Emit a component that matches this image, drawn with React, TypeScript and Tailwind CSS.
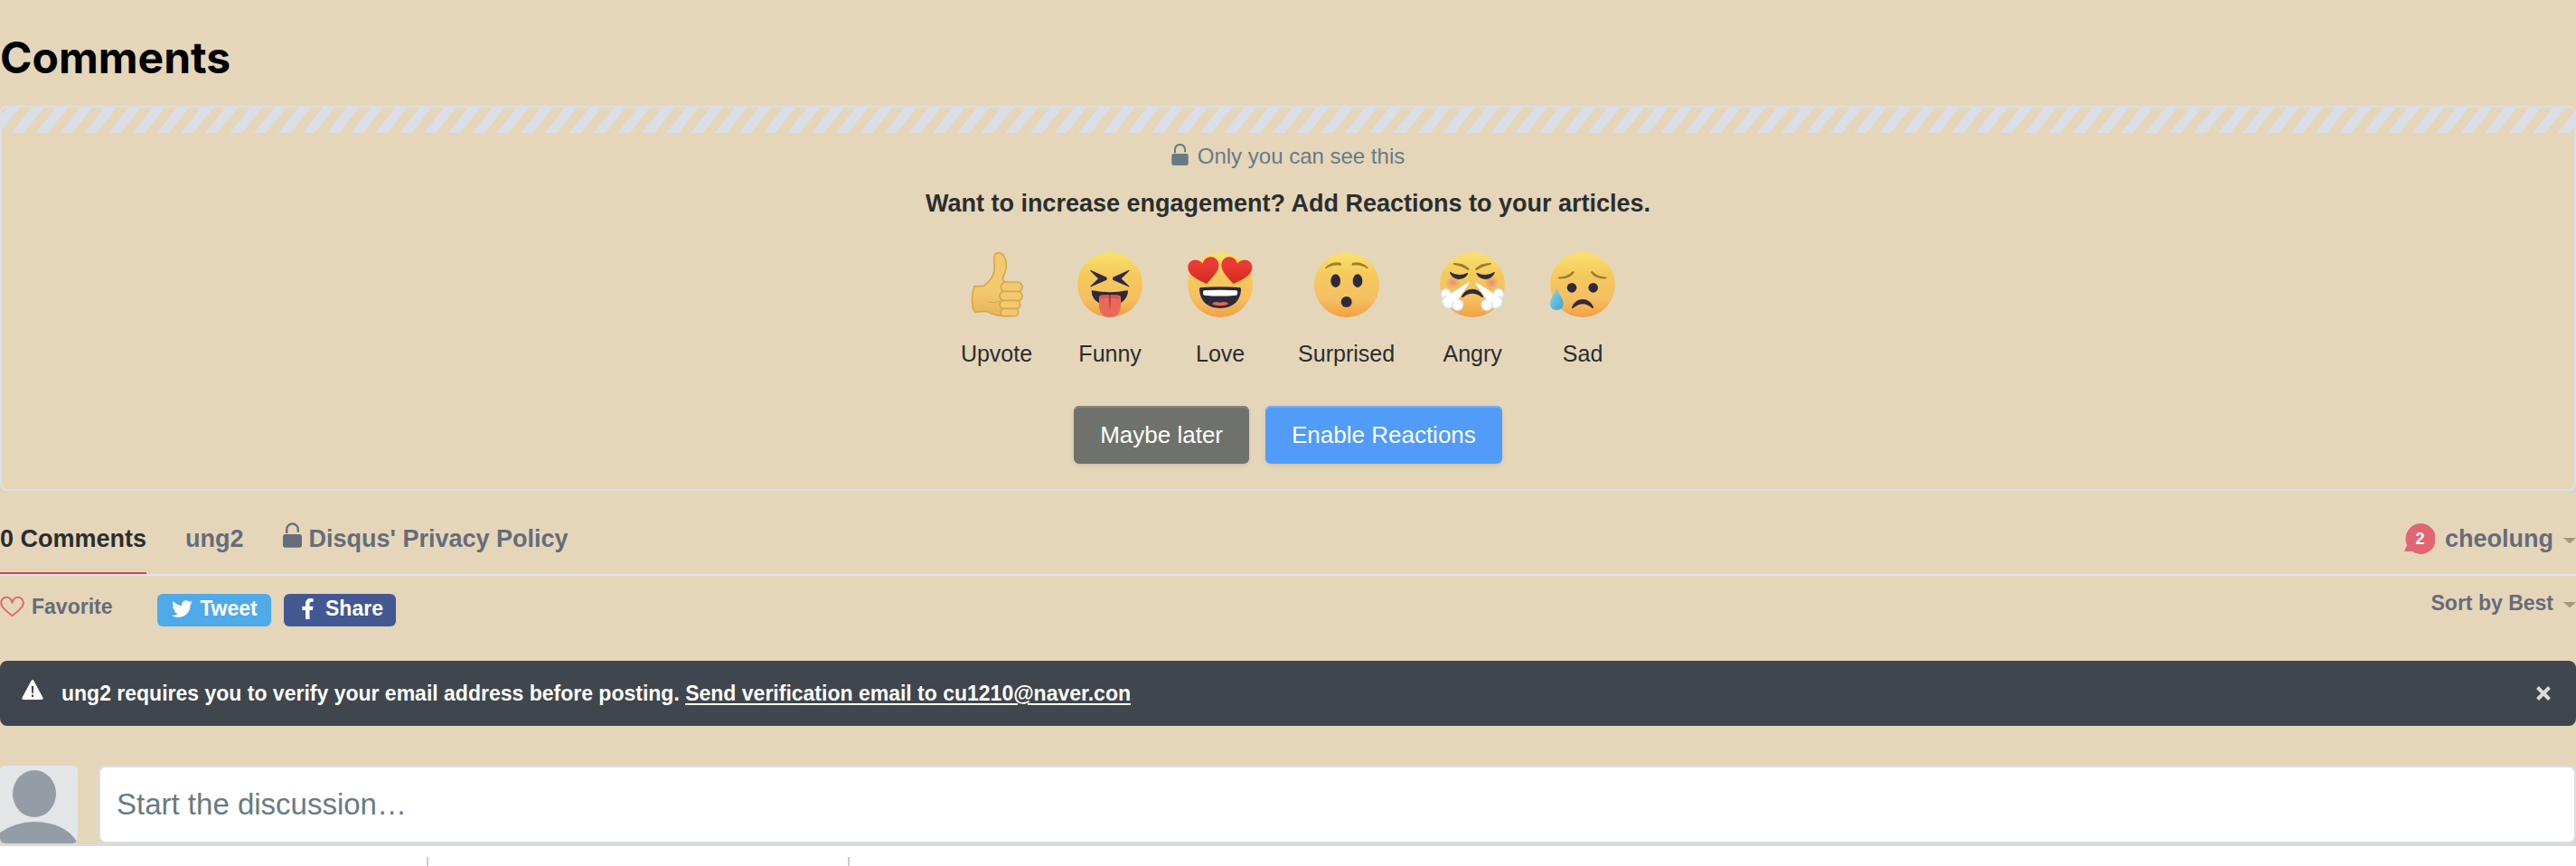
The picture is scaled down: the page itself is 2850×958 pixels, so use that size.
import type { ReactNode } from "react";
import { FaTwitter, FaFacebookF } from "react-icons/fa";

const INK = "#2e2a3b";
const BROW = "#9a7d2f";

function Face({ id, children }: { id: string; children: ReactNode }) {
  return (
    <svg viewBox="0 0 216 216" className="size-[72px]" aria-hidden="true">
      <defs>
        <linearGradient id={id} x1="0" y1="0" x2="0" y2="1">
          <stop offset="0" stopColor="#f8e36f" />
          <stop offset="0.35" stopColor="#f5c95b" />
          <stop offset="0.72" stopColor="#f4c063" />
          <stop offset="1" stopColor="#f2a040" />
        </linearGradient>
      </defs>
      <circle cx="108" cy="108" r="108" fill={`url(#${id})`} />
      {children}
    </svg>
  );
}

/* Draws a shape and its mirror image about the face's vertical axis. */
function Mirrored({ children }: { children: ReactNode }) {
  return (
    <>
      {children}
      <g transform="translate(215 0) scale(-1 1)">{children}</g>
    </>
  );
}

function Upvote() {
  const line = { fill: "#f3c970", stroke: "#d6a650", strokeWidth: 5 };
  return (
    <svg viewBox="0 0 216 216" className="size-[72px]" aria-hidden="true">
      <defs>
        <linearGradient id="palm" x1="0" y1="0" x2="0" y2="1">
          <stop offset="0.6" stopColor="#f3c970" />
          <stop offset="1" stopColor="#e5b45a" />
        </linearGradient>
      </defs>
      <path
        d="M33 113 L64 112 C82 98 97 80 99 62 C101 42 98 26 99 14 C101 5 108 2 114 2 C131 3 139 24 139 45 C139 62 131 75 127 87 C128 95 133 98 140 99 L165 110 V205 L150 211 C120 214 100 210 76 197 C60 194 48 198 35 200 C22 180 23 140 33 113Z"
        fill="url(#palm)"
        stroke="#d6a650"
        strokeWidth="5"
        strokeLinejoin="round"
      />
      <rect x="121" y="99" width="71" height="33" rx="16" {...line} />
      <rect x="117" y="130" width="75" height="31" rx="15" {...line} />
      <rect x="117" y="160" width="68" height="28" rx="14" {...line} />
      <rect x="121" y="187" width="58" height="25" rx="12" {...line} />
      <path d="M80 166 Q98 169 117 163" fill="none" stroke="#d6a650" strokeWidth="3" strokeLinecap="round" />
    </svg>
  );
}

function Funny() {
  return (
    <Face id="funny">
      <Mirrored>
        <path d="M44 59 L97 83 Q99 88 97 92 L45 115 Q41 116 44 112 L69 88 L43 62 Q42 59 44 59Z" fill={INK} />
      </Mirrored>
      <path d="M50 127 Q108 139 165 127 Q168 127 168 131 C165 158 145 175 108 175 C70 175 49 158 47 131 Q47 126 50 127Z" fill={INK} />
      <path d="M72 150 Q73 141 88 142 L128 142 Q143 141 144 150 V176 C144 202 130 216 108 216 C86 216 72 202 72 176Z" fill="#e9695b" />
      <path d="M76 145 Q108 138 140 145 L140 155 Q108 150 76 155Z" fill="#c74f4b" opacity="0.6" />
      <path d="M105 142 H111 L109 186 Q108 191 107 186Z" fill="#a3373c" />
    </Face>
  );
}

function Love() {
  return (
    <Face id="love">
      <defs>
        <linearGradient id="heart" x1="0" y1="0" x2="0" y2="1">
          <stop offset="0.3" stopColor="#e93b34" />
          <stop offset="1" stopColor="#cf2a1c" />
        </linearGradient>
      </defs>
      <Mirrored>
        <path
          d="M63 105 C40 93 4 80 1 53 C-2 25 33 15 50 38 C55 10 98 7 103 40 C105 62 82 84 63 105Z"
          fill="url(#heart)"
        />
      </Mirrored>
      <path d="M42 117 Q108 112 174 117 Q178 118 177 127 C174 166 146 186 108 186 C70 186 42 166 39 127 Q38 118 42 117Z" fill={INK} />
      <path d="M54 127 Q108 123 162 127 Q166 128 165 134 Q165 143 160 143 Q108 148 56 143 Q51 143 51 134 Q50 128 54 127Z" fill="#fff" />
      <path d="M80 172 Q88 164 98 165 Q108 168 118 165 Q130 164 136 172 Q126 178 108 178 Q90 178 80 172Z" fill="#e2665a" />
    </Face>
  );
}

function Surprised() {
  return (
    <Face id="surprised">
      <Mirrored>
        <path d="M37 50 Q59 30 88 35 Q92 39 89 44 Q62 39 40 54 Q34 55 37 50Z" fill={BROW} />
        <ellipse cx="71" cy="95" rx="16" ry="22" fill={INK} />
      </Mirrored>
      <circle cx="107" cy="165" r="18" fill={INK} />
    </Face>
  );
}

function Angry() {
  return (
    <Face id="angry">
      <defs>
        <radialGradient id="blush">
          <stop offset="0" stopColor="#e68a78" stopOpacity="0.9" />
          <stop offset="1" stopColor="#e68a78" stopOpacity="0" />
        </radialGradient>
        <radialGradient id="puff">
          <stop offset="0.6" stopColor="#fff" />
          <stop offset="1" stopColor="#d3dfe8" />
        </radialGradient>
      </defs>
      <Mirrored>
        <circle cx="44" cy="101" r="25" fill="url(#blush)" />
        <path d="M45 36 Q78 34 97 54 Q98 60 94 61 Q72 45 46 41 Q42 38 45 36Z" fill={BROW} />
        <path d="M34 65 Q62 84 92 68 Q95 68 93 73 Q83 90 62 90 Q42 88 33 69 Q32 65 34 65Z" fill={INK} />
        <circle cx="20" cy="138" r="18" fill="url(#puff)" />
        <circle cx="30" cy="164" r="24" fill="url(#puff)" />
        <circle cx="59" cy="175" r="20" fill="url(#puff)" />
        <path d="M96 99 Q99 101 96 106 L58 160 L30 168 L20 142 L32 140 Z" fill="#fff" />
      </Mirrored>
      <path d="M72 146 Q84 122 108 122 Q132 122 144 146 Q145 153 139 149 Q108 126 77 149 Q71 153 72 146Z" fill={INK} />
    </Face>
  );
}

function Sad() {
  return (
    <Face id="sad">
      <defs>
        <linearGradient id="tear" x1="0" y1="0" x2="1" y2="1">
          <stop offset="0" stopColor="#8fd3f5" />
          <stop offset="1" stopColor="#3fa3cf" />
        </linearGradient>
      </defs>
      <Mirrored>
        <path d="M27 83 Q58 82 75 63 Q81 62 80 68 Q62 90 30 88 Q25 86 27 83Z" fill={BROW} />
        <circle cx="72" cy="118" r="16" fill={INK} />
      </Mirrored>
      <path d="M72 182 Q84 156 108 156 Q132 156 144 182 Q144 189 139 185 Q108 158 77 185 Q71 189 72 182Z" fill={INK} />
      <path d="M22 120 C26 136 44 152 44 170 C44 184 34 192 22 192 C10 192 0 184 0 170 C0 152 18 136 22 120Z" fill="url(#tear)" />
    </Face>
  );
}

function Lock({ className }: { className: string }) {
  return (
    <svg viewBox="0 0 20 26" className={className} aria-hidden="true">
      <path d="M4 11 V7 a6 6 0 0 1 12 0 V10" fill="none" stroke="currentColor" strokeWidth="2.2" />
      <rect y="12" width="20" height="14" rx="2.5" fill="currentColor" />
    </svg>
  );
}

function Caret() {
  return (
    <svg viewBox="0 0 14 6" className="mt-1 h-[6px] w-[14px]" aria-hidden="true">
      <path d="M0 0 H14 L8 5.5 Q7 6.4 6 5.5Z" fill="#a39781" />
    </svg>
  );
}

const reactions = [
  { label: "Upvote", icon: <Upvote /> },
  { label: "Funny", icon: <Funny /> },
  { label: "Love", icon: <Love /> },
  { label: "Surprised", icon: <Surprised /> },
  { label: "Angry", icon: <Angry /> },
  { label: "Sad", icon: <Sad /> },
];

export default function App() {
  return (
    <div className="min-h-screen bg-white font-['Liberation_Sans',Arial,sans-serif]">
      <main className="bg-[#e5d6ba] pb-px">
        <h1 className="pt-8 pb-[21px] font-['Inter',sans-serif] text-[48px] leading-[64px] font-bold text-black">
          Comments
        </h1>

        <section className="flex flex-col items-center overflow-hidden rounded-lg border-2 border-[#dadee6] pb-7 text-[#2a2e2e]">
          <div className="h-7 w-full bg-[repeating-linear-gradient(128deg,transparent_0,transparent_4.7px,#dadee6_4.7px,#dadee6_15.3px,transparent_15.3px,transparent_21.14px)]" />
          <p className="mt-2 flex items-center gap-[10px] text-[24px] leading-9 text-[#687a86]">
            <Lock className="mb-1 h-6 w-[19px]" />
            Only you can see this
          </p>
          <h2 className="mt-4 text-[27px] leading-9 font-bold">
            Want to increase engagement? Add Reactions to your articles.
          </h2>
          <ul className="mt-9 flex gap-[50px]">
            {reactions.map((r) => (
              <li key={r.label}>
                <button type="button" className="flex flex-col items-center gap-6 text-[25px] leading-8">
                  {r.icon}
                  {r.label}
                </button>
              </li>
            ))}
          </ul>
          <div className="mt-[42px] flex gap-[18px] text-[26px] leading-9 text-white">
            <button type="button" className="rounded-md bg-[#6f726c] px-[29px] py-[14px] shadow-[inset_0_2px_0_#83877f,0_2px_4px_#0000001a]">
              Maybe later
            </button>
            <button type="button" className="rounded-md bg-[#519cf9] px-[29px] py-[14px] shadow-[inset_0_2px_0_#6fadfa,0_2px_4px_#0000001a]">
              Enable Reactions
            </button>
          </div>
        </section>

        <nav className="mt-[30px] flex border-b-2 border-[#e3e6ea] text-[27px] leading-[44px] font-bold text-[#656c7a]">
          <a href="#comments" className="mr-[43px] border-b-2 border-[#d6424d] pt-px pb-[15px] text-[#2a2e2e]">
            0 Comments
          </a>
          <a href="#forum" className="mr-[43px] pt-px">ung2</a>
          <a href="#privacy" className="flex items-start gap-2 pt-px">
            <Lock className="mt-1 h-7 w-[21px]" />
            Disqus' Privacy Policy
          </a>
          <button type="button" className="ml-auto flex h-[46px] items-center gap-[11px]">
            <span className="grid place-items-center text-[18px] leading-none text-white">
              <svg viewBox="0 0 34 34" className="col-start-1 row-start-1 size-[34px]" aria-hidden="true">
                <path d="M18 0 A16.5 17 0 1 1 9 31 L0 31 L3 24 A16.5 17 0 0 1 18 0Z" fill="#e16673" />
              </svg>
              <span className="col-start-1 row-start-1 pl-px">2</span>
            </span>
            <span>cheolung</span>
            <Caret />
          </button>
        </nav>

        <div className="flex items-start pt-5 text-[23px] leading-7 font-bold text-[#656c7a]">
          <button type="button" className="flex items-center gap-2">
            <svg viewBox="0 0 28 24" className="h-6 w-[27px]" aria-hidden="true">
              <path
                d="M14 22.5 C7 17 1.2 12.5 1.2 7.5 C1.2 4 4 1.4 7.4 1.4 C10.4 1.4 13 3.4 14 7.6 C15 3.4 17.6 1.4 20.6 1.4 C24 1.4 26.8 4 26.8 7.5 C26.8 12.5 21 17 14 22.5Z"
                fill="none"
                stroke="#e16673"
                strokeWidth="2"
                strokeLinejoin="round"
              />
            </svg>
            Favorite
          </button>
          <button type="button" className="ml-[50px] flex h-9 w-[126px] items-center justify-center gap-2 rounded-md bg-[#4eaae9] pb-1 text-white">
            <FaTwitter className="size-[23px]" />
            Tweet
          </button>
          <button type="button" className="ml-[14px] flex h-9 w-[124px] items-center justify-center gap-2 rounded-md bg-[#435893] pb-1 text-white">
            <FaFacebookF className="size-[23px]" />
            Share
          </button>
          <button type="button" className="-mt-1 ml-auto flex items-center gap-[11px]">
            Sort by Best
            <Caret />
          </button>
        </div>

        <div role="alert" className="mt-[38px] flex h-[72px] items-center rounded-lg bg-[#3f464d] pr-7 pl-6 text-[23px] font-bold text-white">
          <svg viewBox="0 0 24 22" className="mr-5 mb-2 h-[22px] w-6" aria-hidden="true">
            <path d="M10.6 1 Q12 -1 13.4 1 L23.6 20 Q24 22 22 22 H2 Q0 22 0.4 20Z" fill="#fff" />
            <path d="M10.8 7 H13.2 L12.8 15 H11.2Z M11 16.6 H13 V19 H11Z" fill="#3f464d" />
          </svg>
          <p>
            ung2 requires you to verify your email address before posting.{" "}
            <a href="#verify" className="underline decoration-2 underline-offset-3">
              Send verification email to cu1210@naver.con
            </a>
          </p>
          <button type="button" aria-label="Close" className="ml-auto">
            <svg viewBox="0 0 16 16" className="size-4" aria-hidden="true">
              <path d="M1.5 1.5 L14.5 14.5 M14.5 1.5 L1.5 14.5" stroke="#dcdcdc" strokeWidth="4" />
            </svg>
          </button>
        </div>

        <form className="mt-11 flex gap-[23px]">
          <svg viewBox="0 0 86 86" className="size-[86px] rounded-md bg-[#e2e6e9]" role="img" aria-label="Your avatar">
            <ellipse cx="38" cy="31" rx="24" ry="26" fill="#949da6" />
            <path d="M0 74 Q18 62 38 62 Q72 63 85 84 L84 86 H0Z" fill="#949da6" />
          </svg>
          <input
            type="text"
            aria-label="Start the discussion"
            placeholder="Start the discussion…"
            className="h-[86px] min-w-0 flex-1 rounded-lg border-2 border-[#dadee3] bg-white px-[18px] text-[33px] text-[#2a2e2e] placeholder:text-[#687a86] placeholder:opacity-100"
          />
        </form>
      </main>

      <footer className="flex border-t-2 border-[#d7dce1] pt-3">
        <div className="h-[10px] w-[474px] border-r-2 border-[#cccccc]" />
        <div className="h-[10px] w-[466px] border-r-2 border-[#cccccc]" />
      </footer>
    </div>
  );
}
